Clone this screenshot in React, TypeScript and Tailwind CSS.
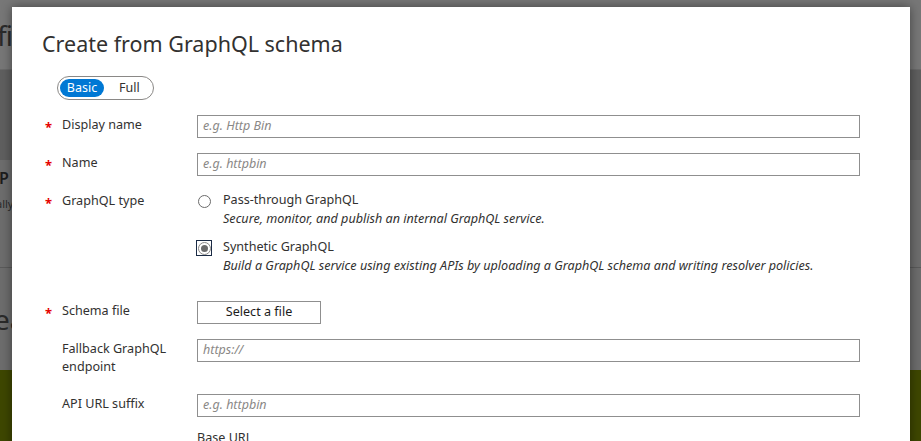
import React from 'react';

// "Create from GraphQL schema" blade, shown over a dimmed portal page.

const font = { fontFamily: '"Noto Sans", "Open Sans", Arial, sans-serif' };

function TextField({ placeholder }: { placeholder: string }) {
    return (
        <div className="h-[23px] w-full border border-[#8f8f8f] bg-white flex items-center px-[5px]">
            <span className="italic text-[12.5px] text-[#8a8886] leading-none">{placeholder}</span>
        </div>
    );
}

function Radio({ checked }: { checked?: boolean }) {
    if (checked) {
        return (
            <div className="w-[16px] h-[16px] border border-[#1b2b45] flex items-center justify-center">
                <div className="w-[13px] h-[13px] rounded-full border border-[#8a8886] flex items-center justify-center">
                    <div className="w-[7px] h-[7px] rounded-full bg-[#6b6b6b]" />
                </div>
            </div>
        );
    }
    return (
        <div className="w-[16px] h-[16px] flex items-center justify-center -ml-[1px] mr-[1px]">
            <div className="w-[13px] h-[13px] rounded-full border border-[#6b6b6b]" />
        </div>
    );
}

function Row({ required, label, children, className = '' }: { required?: boolean; label: React.ReactNode; children: React.ReactNode; className?: string }) {
    return (
        <div className={`grid grid-cols-[20px_135px_1fr] items-start ${className}`}>
            <div className="h-[18px] pl-[3px] pt-[3px] text-[13px] leading-[18px] font-bold text-[#e50000]">{required ? '*' : ''}</div>
            <div className="text-[12.6px] leading-[18px] text-[#323130] pt-[1px]">{label}</div>
            <div>{children}</div>
        </div>
    );
}

function Backdrop() {
    return (
        <div className="h-[441px] w-full flex flex-col" style={font}>
            <div className="h-[70px] bg-[#777777] border-b border-[#6a6a6a] flex items-center overflow-hidden">
                <span className="text-[28px] text-[#2a2a2a] leading-none -ml-[3px] tracking-[-1px]">fi</span>
            </div>
            <div className="h-[90px] bg-[#5f5f5f]" />
            <div className="h-[108px] bg-[#6d6d6d] border-b border-[#5a5a5a] pt-[10px] overflow-hidden">
                <div className="text-[16px] font-semibold text-[#1d1d1d] leading-none -ml-[1px]">P</div>
                <div className="text-[11px] text-[#2a2a2a] mt-[10px] -ml-[4px]">ally</div>
            </div>
            <div className="h-[102px] bg-[#6d6d6d] flex items-center overflow-hidden">
                <span className="text-[28px] text-[#2a2a2a] -ml-[6px] leading-none">ea</span>
            </div>
            <div className="flex-1 bg-[#3e4700]" />
        </div>
    );
}

export default function App() {
    return (
        <div className="relative w-[921px] h-[441px] overflow-hidden bg-[#707070]" style={font}>
            <Backdrop />

            {/* the blade */}
            <div className="absolute left-[12px] top-[7px] w-[898px] h-[460px] bg-white shadow-[0_0_10px_rgba(0,0,0,0.45)] pl-[30px] pr-[50px] pt-[22px]">
                <h1 className="text-[21.5px] leading-[30px] text-[#323130]">Create from GraphQL schema</h1>

                <div className="mt-[17px] ml-[15px] inline-flex items-center h-[24px] w-[97px] rounded-full border border-[#8a8886] px-[2px]">
                    <span className="h-[18px] w-[44px] rounded-full bg-[#0078d4] text-white text-[12.5px] leading-[18px] text-center">Basic</span>
                    <span className="ml-[15px] text-[12.5px] text-[#323130] leading-none">Full</span>
                </div>

                <Row required label="Display name" className="mt-[15px]">
                    <TextField placeholder="e.g. Http Bin" />
                </Row>

                <Row required label="Name" className="mt-[15px]">
                    <TextField placeholder="e.g. httpbin" />
                </Row>

                <Row required label="GraphQL type" className="mt-[15px]">
                    <div className="flex flex-col">
                        <div className="flex items-start gap-[10px]">
                            <div className="pt-[2px]"><Radio /></div>
                            <div>
                                <div className="text-[12.6px] leading-[18px] text-[#323130]">Pass-through GraphQL</div>
                                <div className="italic text-[12.6px] leading-[18px] text-[#323130] mt-[1px]">Secure, monitor, and publish an internal GraphQL service.</div>
                            </div>
                        </div>
                        <div className="flex items-start gap-[10px] mt-[10px]">
                            <div className="pt-[2px] -ml-[1px] mr-[1px]"><Radio checked /></div>
                            <div>
                                <div className="text-[12.6px] leading-[18px] text-[#323130]">Synthetic GraphQL</div>
                                <div className="italic text-[12.6px] leading-[18px] text-[#323130] mt-[1px]">Build a GraphQL service using existing APIs by uploading a GraphQL schema and writing resolver policies.</div>
                            </div>
                        </div>
                    </div>
                </Row>

                <Row required label="Schema file" className="mt-[26px]">
                    <div className="h-[23px] w-[124px] border border-[#8f8f8f] flex items-center justify-center text-[12.6px] text-[#1b1b1b]">Select a file</div>
                </Row>

                <Row label={<>Fallback GraphQL<br />endpoint</>} className="mt-[15px]">
                    <TextField placeholder="https://" />
                </Row>

                <Row label="API URL suffix" className="mt-[18px]">
                    <TextField placeholder="e.g. httpbin" />
                </Row>

                <Row label="" className="mt-[12px]">
                    <div className="text-[12.6px] leading-[18px] text-[#323130]">Base URL</div>
                </Row>
            </div>
        </div>
    );
}
